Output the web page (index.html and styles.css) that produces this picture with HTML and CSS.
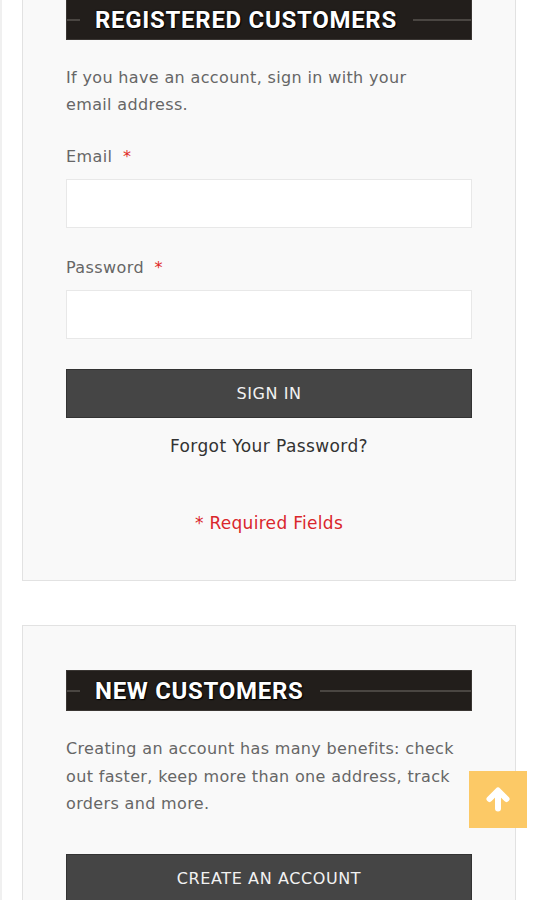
FILE: index.html
```html
<!DOCTYPE html>
<html lang="en">
<head>
    <meta charset="UTF-8">
    <meta name="viewport" content="width=device-width, initial-scale=1.0">
    <title>Customer Login</title>
    <link rel="stylesheet" href="styles.css">
</head>
<body>

<div class="page">
    <div class="block login">
        <h2 class="block-title"><span>Registered Customers</span></h2>
        <p class="intro">If you have an account, sign in with your<br>email address.</p>
        <form class="form">
            <div class="field">
                <label class="label" for="email">Email <em>*</em></label>
                <input class="input" type="email" id="email">
            </div>
            <div class="field">
                <label class="label" for="pass">Password <em>*</em></label>
                <input class="input" type="password" id="pass">
            </div>
            <button class="btn" type="button">Sign In</button>
            <a class="remind" href="#">Forgot Your Password?</a>
            <p class="required">* Required Fields</p>
        </form>
    </div>

    <div class="block new">
        <h2 class="block-title"><span>New Customers</span></h2>
        <p class="intro">Creating an account has many benefits: check out faster, keep more than one address, track orders and more.</p>
        <button class="btn" type="button">Create an Account</button>
    </div>
</div>

<a class="to-top" href="#">
    <svg width="26" height="25" viewBox="0 0 26 25">
        <path d="M13 21.5 V5 M4.5 12 L13 3.5 L21.5 12" fill="none" stroke="#fff" stroke-width="6" stroke-linecap="round" stroke-linejoin="round"/>
    </svg>
</a>

</body>
</html>
```

FILE: styles.css
```css
body {
    margin: 0;
    background: #fff;
    font-family: "DejaVu Sans", Verdana, sans-serif;
    font-size: 16px;
    color: #666;
    overflow: hidden;
}

.page {
    margin-top: -46px; /* page is scrolled, top of first block hidden */
    padding: 0 22px 0 20px;
    border-left: 2px solid #f0f0f0;
    min-height: 1000px;
}

.block {
    background: #f9f9f9;
    border: 1px solid #e2e2e2;
    padding: 44px 43px 43px 43px;
    margin-bottom: 44px;
}

.block-title {
    display: flex;
    align-items: center;
    height: 41px;
    margin: 0;
    background: #221e1b;
    border: 1px solid #3a3633;
    box-sizing: border-box;
    font-family: Roboto, "Liberation Sans", sans-serif;
    font-weight: 700;
    font-size: 24px;
    text-transform: uppercase;
    color: #fff;
    text-shadow: 0 0 2px #000, 1px 1px 1px #000;
    letter-spacing: 0.7px;
}

.block-title::before,
.block-title::after {
    content: '';
    height: 2px;
    background: #4a4642;
}

.block-title::before {
    width: 13px;
    margin-right: 15px;
}

.block-title::after {
    flex: 1;
    margin-left: 16px;
}

.intro {
    margin: 24px 0 0 0;
    line-height: 27px;
    letter-spacing: 0.35px;
}

.new .intro {
    line-height: 27.5px;
}

.form {
    display: flex;
    flex-direction: column;
}

.field {
    margin-top: 25px;
}

.field + .field {
    margin-top: 26px;
}

.label {
    display: block;
    line-height: 27px;
    margin-bottom: 9px;
    letter-spacing: 0.4px;
}

.label em {
    font-style: normal;
    color: #e02b27;
    margin-left: 5px;
}

.input {
    display: block;
    width: 100%;
    height: 49px;
    box-sizing: border-box;
    border: 1px solid #e8e8e8;
    background: #fff;
    margin: 0;
}

.btn {
    display: block;
    width: 100%;
    height: 49px;
    margin-top: 30px;
    border: 1px solid #333;
    background: #454545;
    color: #f2f2f2;
    font-family: "DejaVu Sans", Verdana, sans-serif;
    font-size: 16px;
    letter-spacing: 0.6px;
    text-transform: uppercase;
    cursor: pointer;
}

.new .btn {
    margin-top: 36px;
}

.remind {
    display: block;
    text-align: center;
    margin-top: 15px;
    line-height: 27px;
    font-size: 17px;
    letter-spacing: 0.4px;
    color: #333;
    text-decoration: none;
}

.required {
    margin: 50px 0 0 0;
    text-align: center;
    line-height: 27px;
    font-size: 17px;
    letter-spacing: 0.3px;
    color: #d9262c;
}

.to-top {
    position: fixed;
    right: 11px;
    bottom: 72px;
    width: 58px;
    height: 57px;
    background: #fcc966;
    display: flex;
    justify-content: center;
    align-items: center;
}
```
